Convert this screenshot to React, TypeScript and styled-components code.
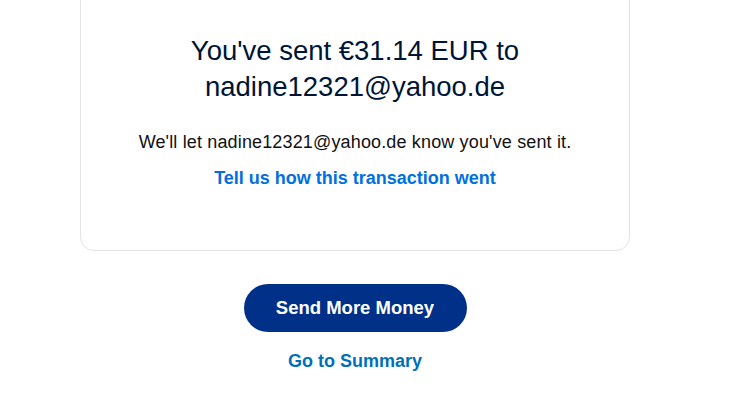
import React from "react";
import styled, { createGlobalStyle } from "styled-components";

const Global = createGlobalStyle`
  html, body { margin: 0; padding: 0; background: #ffffff; }
  body { font-family: "Liberation Sans", Arial, sans-serif; -webkit-font-smoothing: antialiased; }
`;

const Page = styled.div`
  width: 742px;
  height: 410px;
  overflow: hidden;
  display: flex;
  flex-direction: column;
  align-items: flex-start;
  padding-left: 80px;
  box-sizing: border-box;
`;

const Column = styled.div`
  width: 550px;
  display: flex;
  flex-direction: column;
  align-items: center;
`;

const Card = styled.section`
  width: 100%;
  box-sizing: border-box;
  margin-top: -20px;
  padding: 52px 20px 60px;
  border: 1px solid #e3e3e3;
  border-radius: 14px;
  display: flex;
  flex-direction: column;
  align-items: center;
  text-align: center;
`;

const Heading = styled.h1`
  margin: 0;
  font-size: 27.5px;
  line-height: 36px;
  font-weight: 400;
  color: #001435;
`;

const Note = styled.p`
  margin: 25px 0 0;
  font-size: 18px;
  letter-spacing: 0.15px;
  line-height: 24px;
  color: #111111;
`;

const Link = styled.a<{ $tone: string; $size: number }>`
  display: block;
  font-weight: 700;
  font-size: ${(p) => p.$size}px;
  line-height: 24px;
  color: ${(p) => p.$tone};
  text-decoration: none;
  cursor: pointer;
`;

const FeedbackLink = styled(Link)`
  margin-top: 12px;
`;

const PrimaryButton = styled.button`
  margin-top: 33px;
  width: 223px;
  height: 48px;
  border: none;
  border-radius: 24px;
  background: #003087;
  color: #ffffff;
  font-family: "Liberation Sans", Arial, sans-serif;
  font-weight: 700;
  font-size: 18.5px;
  cursor: pointer;
`;

const SummaryLink = styled(Link)`
  margin-top: 17px;
`;

export default function App() {
  return (
    <>
      <Global />
      <Page>
        <Column>
          <Card>
            <Heading>
              You've sent €31.14 EUR to
              <br />
              nadine12321@yahoo.de
            </Heading>
            <Note>We'll let nadine12321@yahoo.de know you've sent it.</Note>
            <FeedbackLink $tone="#0070e0" $size={18}>
              Tell us how this transaction went
            </FeedbackLink>
          </Card>
          <PrimaryButton>Send More Money</PrimaryButton>
          <SummaryLink $tone="#0070ba" $size={18}>
            Go to Summary
          </SummaryLink>
        </Column>
      </Page>
    </>
  );
}
